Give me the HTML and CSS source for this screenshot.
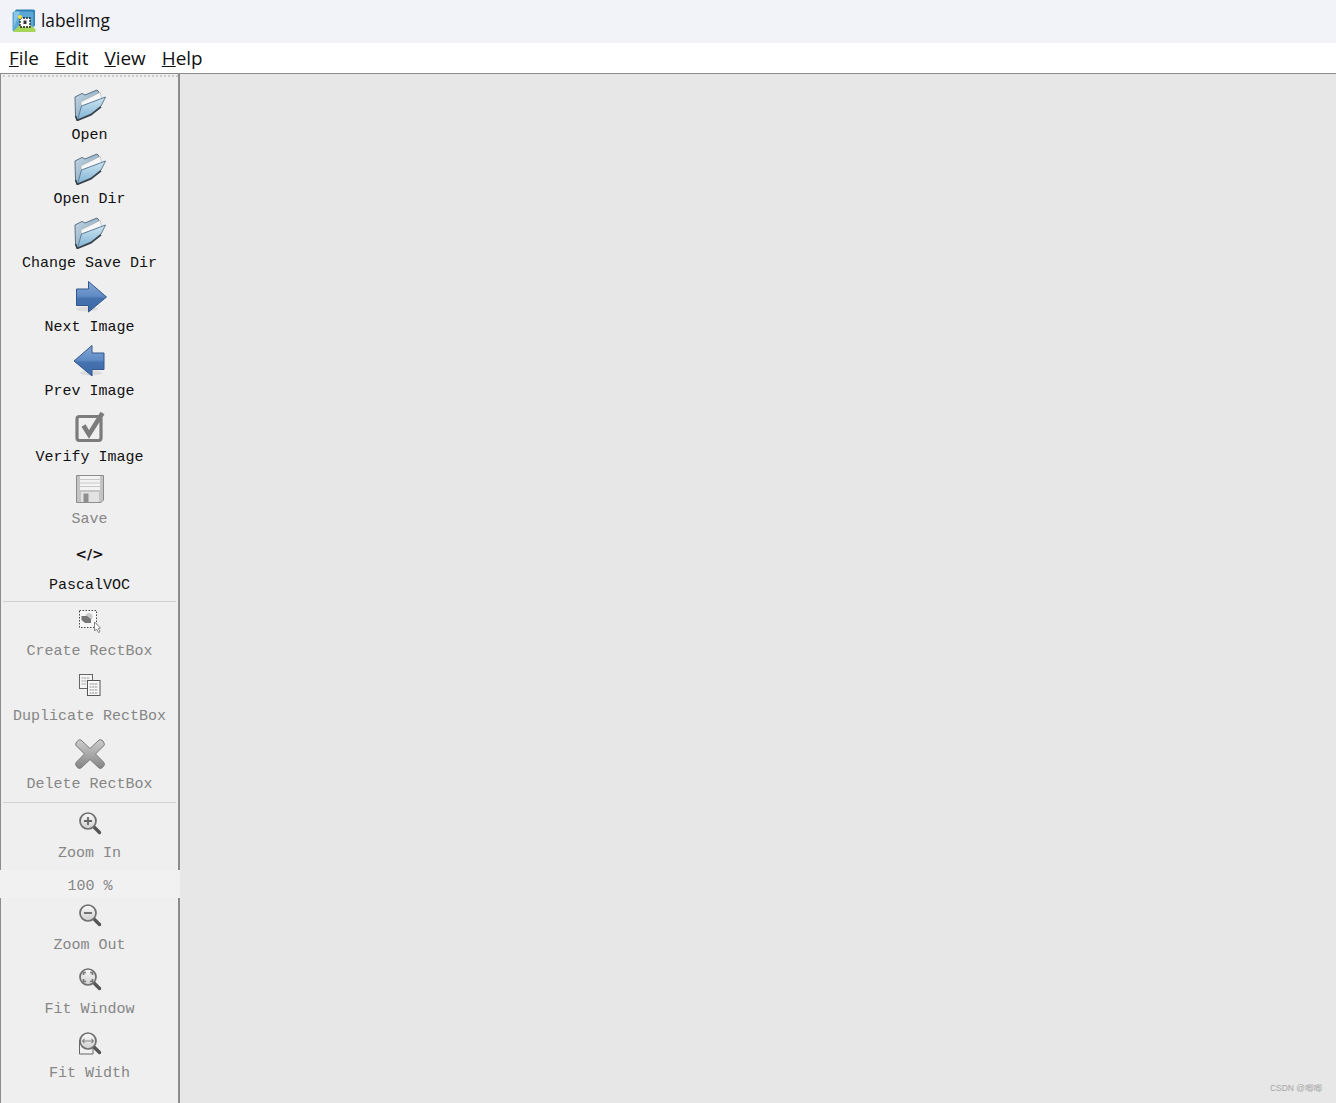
FILE: index.html
```html
<!DOCTYPE html>
<html lang="en">
<head>
    <meta charset="UTF-8">
    <title>labelImg</title>
    <link rel="stylesheet" href="styles.css">
</head>
<body>
    <svg class="defs" width="0" height="0" aria-hidden="true">
        <defs>
            <linearGradient id="folderBack" x1="0" y1="0" x2="1" y2="1">
                <stop offset="0" stop-color="#c9dce9"/>
                <stop offset="1" stop-color="#6f90ab"/>
            </linearGradient>
            <linearGradient id="folderFront" x1="0" y1="0" x2="0" y2="1">
                <stop offset="0" stop-color="#cfe6f3"/>
                <stop offset="1" stop-color="#7fb2d3"/>
            </linearGradient>
            <linearGradient id="arrowBlue" x1="0" y1="0" x2="0" y2="1">
                <stop offset="0" stop-color="#86a9d6"/>
                <stop offset="0.48" stop-color="#5f8ac4"/>
                <stop offset="0.55" stop-color="#4673b0"/>
                <stop offset="1" stop-color="#3a68a6"/>
            </linearGradient>
            <linearGradient id="lens" x1="0" y1="0" x2="0" y2="1">
                <stop offset="0" stop-color="#fafafa"/>
                <stop offset="1" stop-color="#cfcfcf"/>
            </linearGradient>
            <linearGradient id="crossGrey" x1="0" y1="0" x2="0" y2="1">
                <stop offset="0" stop-color="#cdcdcd"/>
                <stop offset="1" stop-color="#858585"/>
            </linearGradient>
            <symbol id="folder" viewBox="0 0 32 32">
                <path d="M1 8 L8 4.500 L11 6 L23 1 L25 3 L26 10 L6 28 L3 31 L1.500 27 Z" fill="url(#folderBack)" stroke="#5c7080" stroke-width="1"/>
                <path d="M7 13 L26 3.500 L28 10 L8 24 Z" fill="#f8f8f8" stroke="#b4b4b4" stroke-width="0.600"/>
                <path d="M3.500 31 L7.500 17 L31.500 8 L27 17 L17 25 Z" fill="url(#folderFront)" stroke="#5d7d94" stroke-width="1" stroke-linejoin="round"/>
                <path d="M1.500 27 L3.200 31.500 L17 25.800 L27 17.800" fill="none" stroke="#333c44" stroke-width="1.500"/>
            </symbol>
            <symbol id="magnifier" viewBox="0 0 24 24">
                <path d="M15 15 L21.500 21.500" stroke="#555" stroke-width="3.400" stroke-linecap="round"/>
                <circle cx="10" cy="10" r="8" fill="url(#lens)" stroke="#6e6e6e" stroke-width="1.700"/>
            </symbol>
        </defs>
    </svg>

    <div class="titlebar">
        <svg class="app-icon" viewBox="0 0 24 24">
            <rect x="3" y="0.500" width="20" height="17" rx="1.500" fill="#2f7fb5"/>
            <rect x="0.500" y="2.500" width="21" height="20" rx="1.500" fill="#5ba7d6"/>
            <path d="M2 2.500 H8 L2 18 Z" fill="#8cc6e6"/>
            <path d="M1 22.500 L12 12 L23.500 20 V23 H3 Z" fill="#a5d65a"/>
            <rect x="8" y="9" width="10" height="9" fill="#fff" stroke="#222" stroke-width="1.300" stroke-dasharray="2 1"/>
            <circle cx="8" cy="8" r="2" fill="#f5e342"/>
            <rect x="11.500" y="11.500" width="3" height="3.500" fill="#333"/>
        </svg>
        <span class="app-name">labelImg</span>
    </div>

    <div class="menubar">
        <span class="menu-item"><u>F</u>ile</span>
        <span class="menu-item"><u>E</u>dit</span>
        <span class="menu-item"><u>V</u>iew</span>
        <span class="menu-item"><u>H</u>elp</span>
    </div>

    <div class="main">
        <div class="toolbar">
            <div class="handle"></div>

            <div class="tool tool-first">
                <div class="tool-icon"><svg width="32" height="32"><use href="#folder"/></svg></div>
                <div class="tool-label">Open</div>
            </div>
            <div class="tool">
                <div class="tool-icon"><svg width="32" height="32"><use href="#folder"/></svg></div>
                <div class="tool-label">Open Dir</div>
            </div>
            <div class="tool">
                <div class="tool-icon"><svg width="32" height="32"><use href="#folder"/></svg></div>
                <div class="tool-label">Change Save Dir</div>
            </div>
            <div class="tool">
                <div class="tool-icon">
                    <svg class="overflow" width="32" height="32" viewBox="0 0 32 32">
                        <ellipse cx="13" cy="28" rx="11" ry="2.500" fill="#dcdcdc"/>
                        <path d="M2.500 8 H14.500 V0.500 L32.500 16 L14.500 31 V24.500 H2.500 Z" fill="url(#arrowBlue)" stroke="#2f578c" stroke-width="1"/>
                    </svg>
                </div>
                <div class="tool-label">Next Image</div>
            </div>
            <div class="tool">
                <div class="tool-icon">
                    <svg class="overflow" width="32" height="32" viewBox="0 0 32 32">
                        <ellipse cx="17" cy="28" rx="11" ry="2.500" fill="#dcdcdc"/>
                        <path d="M30 8 H18 V0.500 L0 16 L18 31 V24.500 H30 Z" fill="url(#arrowBlue)" stroke="#2f578c" stroke-width="1"/>
                    </svg>
                </div>
                <div class="tool-label">Prev Image</div>
            </div>
            <div class="tool gap-12">
                <div class="tool-icon">
                    <svg width="32" height="32" viewBox="0 0 32 32">
                        <rect x="3" y="5.500" width="24" height="24" rx="2.500" fill="none" stroke="#7b7b7b" stroke-width="3.200"/>
                        <path d="M9.500 14.500 L15 23.500 L28.500 2" fill="none" stroke="#7b7b7b" stroke-width="4.600"/>
                    </svg>
                </div>
                <div class="tool-label">Verify Image</div>
            </div>
            <div class="tool gap-8 disabled">
                <div class="tool-icon">
                    <svg width="32" height="32" viewBox="0 0 32 32">
                        <path d="M2.500 2.500 H29.500 V27 L27 29.500 H2.500 Z" fill="#c4c4c4" stroke="#8c8c8c" stroke-width="1"/>
                        <rect x="6" y="3" width="20" height="14" fill="#f3f3f3"/>
                        <path d="M6 6.500 H26 M6 10 H26 M6 13.500 H26" stroke="#c9c9c9" stroke-width="1"/>
                        <rect x="7" y="19" width="18" height="10" fill="#e2e2e2"/>
                        <rect x="9.500" y="20.500" width="5" height="8.500" fill="#8f8f8f"/>
                    </svg>
                </div>
                <div class="tool-label">Save</div>
            </div>
            <div class="tool gap-11 tall">
                <div class="tool-icon"><span class="code-glyph">&lt;/&gt;</span></div>
                <div class="tool-label">PascalVOC</div>
            </div>

            <div class="separator sep-first"></div>

            <div class="tool gap-3 disabled">
                <div class="tool-icon">
                    <svg width="24" height="24" viewBox="0 0 24 24">
                        <rect x="1.500" y="1.500" width="17" height="17" fill="#f7f7f7" stroke="#444" stroke-width="1" stroke-dasharray="1.500 1.500"/>
                        <circle cx="11" cy="7.500" r="3.500" fill="#ccc"/>
                        <path d="M3.500 7 H9 L13 10 V14 H7 L3.500 11 Z" fill="#777"/>
                        <path d="M16.500 13 V22 L18.500 20 L20.500 23.500 L22 22.700 L20.300 19.500 L22.500 19 Z" fill="#fff" stroke="#777" stroke-width="0.900"/>
                    </svg>
                </div>
                <div class="tool-label">Create RectBox</div>
            </div>
            <div class="tool tall disabled">
                <div class="tool-icon">
                    <svg width="24" height="24" viewBox="0 0 24 24">
                        <rect x="1.500" y="1.500" width="13" height="14" fill="#f4f4f4" stroke="#666" stroke-width="1"/>
                        <path d="M3.500 5 H12 M3.500 8 H12 M3.500 11 H8" stroke="#999" stroke-width="1" stroke-dasharray="2 0.700"/>
                        <rect x="9.500" y="7.500" width="12.500" height="15" fill="#fafafa" stroke="#555" stroke-width="1"/>
                        <path d="M11.500 11 H20 M11.500 14 H20 M11.500 17 H20 M11.500 20 H20" stroke="#888" stroke-width="1" stroke-dasharray="2 0.700"/>
                    </svg>
                </div>
                <div class="tool-label">Duplicate RectBox</div>
            </div>
            <div class="tool gap-14 disabled">
                <div class="tool-icon">
                    <svg width="32" height="32" viewBox="0 0 32 32">
                        <path d="M7 2 L16 10.500 L25 2 Q27 1 29 3 L30 5 Q31 7 29.500 8 L21.500 16 L29.500 24 Q31 25.500 30 27.500 L28.500 29.500 Q27 31 25 30 L16 21.500 L7 30 Q5 31 3.500 29.500 L2 27.500 Q1 25.500 2.500 24 L10.500 16 L2.500 8 Q1 7 2 5 L3.500 3 Q5 1 7 2 Z" fill="url(#crossGrey)" stroke="#7a7a7a" stroke-width="1"/>
                    </svg>
                </div>
                <div class="tool-label">Delete RectBox</div>
            </div>

            <div class="separator sep-second"></div>

            <div class="tool gap-5 disabled">
                <div class="tool-icon">
                    <svg width="24" height="24" viewBox="0 0 24 24">
                        <use href="#magnifier"/>
                        <path d="M6 10 H14 M10 6 V14" stroke="#666" stroke-width="1.800"/>
                    </svg>
                </div>
                <div class="tool-label">Zoom In</div>
            </div>
            <div class="zoom-value disabled">100 %</div>
            <div class="tool gap-1 disabled">
                <div class="tool-icon">
                    <svg width="24" height="24" viewBox="0 0 24 24">
                        <use href="#magnifier"/>
                        <path d="M6 10 H14" stroke="#666" stroke-width="1.800"/>
                    </svg>
                </div>
                <div class="tool-label">Zoom Out</div>
            </div>
            <div class="tool disabled">
                <div class="tool-icon">
                    <svg width="24" height="24" viewBox="0 0 24 24">
                        <use href="#magnifier"/>
                        <path d="M5.500 8 V5.500 H8 M12 5.500 H14.500 V8 M14.500 12 V14.500 H12 M8 14.500 H5.500 V12" fill="none" stroke="#777" stroke-width="1.700"/>
                    </svg>
                </div>
                <div class="tool-label">Fit Window</div>
            </div>
            <div class="tool disabled">
                <div class="tool-icon">
                    <svg width="24" height="24" viewBox="0 0 24 24">
                        <path d="M1.500 9 V23 H15 V17" fill="#f2f2f2" stroke="#666" stroke-width="1"/>
                        <use href="#magnifier"/>
                        <path d="M4.500 10 H15.500 M6.500 8 L4.500 10 L6.500 12 M13.500 8 L15.500 10 L13.500 12" fill="none" stroke="#888" stroke-width="1.100"/>
                    </svg>
                </div>
                <div class="tool-label">Fit Width</div>
            </div>
        </div>

        <div class="canvas">
            <span class="watermark">CSDN @唧唧</span>
        </div>
    </div>
</body>
</html>
```

FILE: styles.css
```css
* {
    box-sizing: border-box;
}
html, body {
    height: 100%;
}
body {
    margin: 0;
    display: flex;
    flex-direction: column;
    overflow: hidden;
    font-family: "Open Sans", "Noto Sans", sans-serif;
    color: #111;
    background-color: #e7e7e7;
}
.defs {
    position: absolute;
}
.titlebar {
    height: 43px;
    flex: none;
    display: flex;
    align-items: center;
    padding-left: 12px;
    padding-bottom: 2px;
    background-color: #f2f3f9;
}
.app-icon {
    width: 24px;
    height: 24px;
}
.app-name {
    margin-left: 5px;
    font-size: 17.300px;
}
.menubar {
    height: 30px;
    flex: none;
    display: flex;
    align-items: center;
    gap: 16px;
    padding-left: 9px;
    background-color: #fff;
    font-size: 18.900px;
}
.main {
    flex: 1;
    display: flex;
    min-height: 0;
    border-top: 1px solid #8a8a8a;
}
.toolbar {
    width: 180px;
    flex: none;
    border-left: 1px solid #8c8c8c;
    border-right: 2px solid #8c8c8c;
    background-color: #efefef;
    font-family: "Liberation Mono", monospace;
    font-size: 15px;
}
.handle {
    height: 3px;
    margin: 1px 0 0 2px;
    border-top: 2px dotted #cccccc;
}
.tool {
    height: 54px;
    margin-top: 10px;
    display: flex;
    flex-direction: column;
    align-items: center;
}
.tool-first {
    margin-top: 11px;
}
.tall {
    height: 55px;
}
.gap-1 { margin-top: 1px; }
.gap-3 { margin-top: 3px; }
.gap-5 { margin-top: 4px; }
.gap-8 { margin-top: 8px; }
.gap-11 { margin-top: 11px; }
.gap-12 { margin-top: 12px; }
.gap-14 { margin-top: 14px; }
.tool-icon {
    height: 32px;
    flex: none;
    display: flex;
    align-items: center;
    justify-content: center;
}
.overflow {
    overflow: visible;
}
.tool-label {
    margin-top: auto;
    height: 18px;
    line-height: 22px;
    white-space: pre;
}
.disabled {
    color: #868686;
}
.code-glyph {
    font-family: "DejaVu Sans", sans-serif;
    font-weight: bold;
    font-size: 14px;
    color: #111;
}
.separator {
    height: 1px;
    margin: 0 2px;
    background-color: #d0d0d0;
}
.sep-first {
    margin-top: 8px;
}
.sep-second {
    margin-top: 10px;
}
.zoom-value {
    height: 28px;
    margin: 9px -2px 0 -1px;
    line-height: 34px;
    text-align: center;
    background-color: #f1f1f1;
}
.canvas {
    flex: 1;
    position: relative;
    background-color: #e7e7e7;
}
.watermark {
    position: absolute;
    right: 14px;
    bottom: 10px;
    font-family: "Liberation Sans", "Noto Sans CJK SC", sans-serif;
    font-size: 8.500px;
    color: #a6a6a6;
}
```
